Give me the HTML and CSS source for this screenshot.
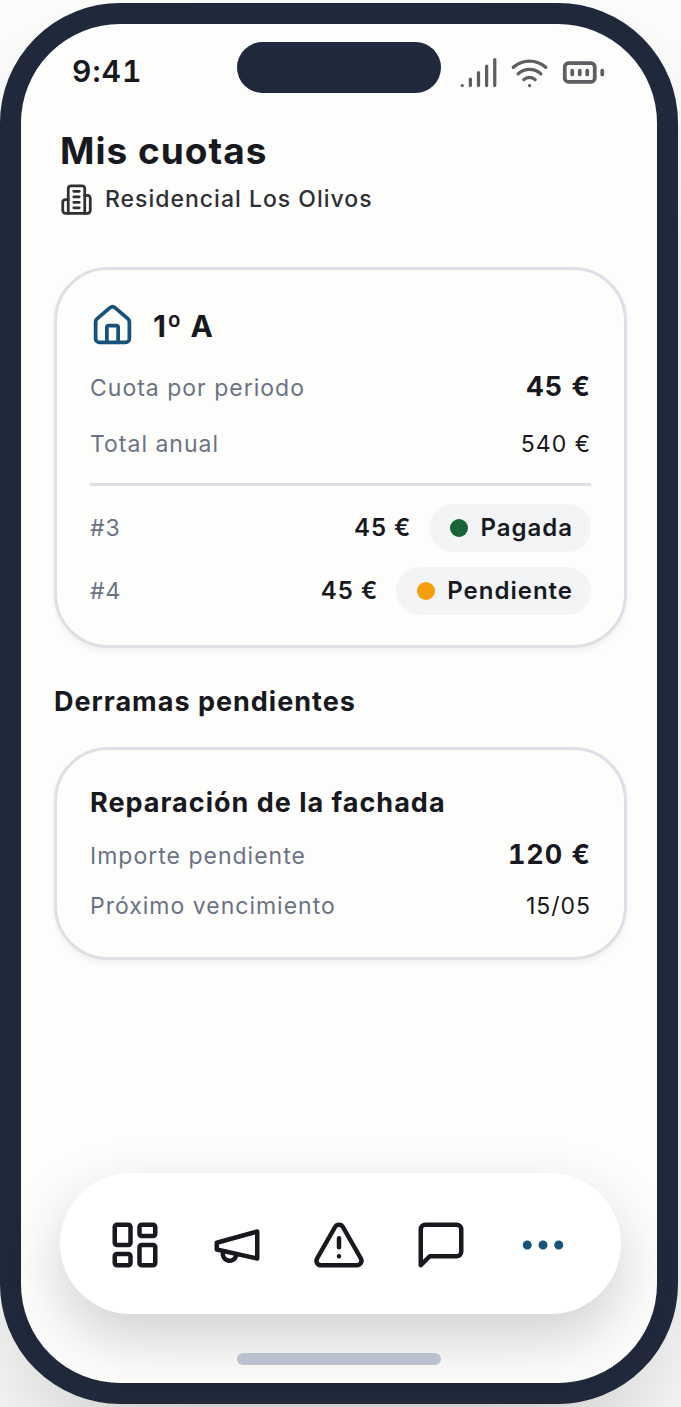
FILE: index.html
```html
<!DOCTYPE html>
<html lang="es">
<head>
  <meta charset="UTF-8" />
  <meta name="viewport" content="width=device-width, initial-scale=1.0"/>
  <title>Mis cuotas - Residencial Los Olivos</title>
  <link rel="stylesheet" href="styles.css">
</head>
<body>
  <div class="phone">
    <div class="status-bar">
      <span class="time">9:41</span>
      <span class="island"></span>
      <div class="status-icons">
        <svg class="icon" viewBox="0 0 24 24"><path d="M2 20h.01M7 20v-4M12 20v-8M17 20V8M22 4v16"/></svg>
        <svg class="icon" viewBox="0 0 24 24"><path d="M12 20h.01M2 8.82a15 15 0 0 1 20 0M5 12.859a10 10 0 0 1 14 0M8.5 16.429a5 5 0 0 1 7 0"/></svg>
        <svg class="icon battery" viewBox="0 0 24 24"><rect x="2" y="7" width="16" height="10" rx="2"/><path d="M22 11v2M6 11v2M10 11v2M14 11v2"/></svg>
      </div>
    </div>

    <header class="header">
      <h1>Mis cuotas</h1>
      <p class="community">
        <svg class="icon" viewBox="0 0 24 24"><path d="M6 22V4a2 2 0 0 1 2-2h8a2 2 0 0 1 2 2v18Z"/><path d="M6 12H4a2 2 0 0 0-2 2v6a2 2 0 0 0 2 2h2M18 9h2a2 2 0 0 1 2 2v9a2 2 0 0 1-2 2h-2M10 6h4M10 10h4M10 14h4M10 18h4"/></svg>
        Residencial Los Olivos
      </p>
    </header>

    <main class="content">
      <section class="card card-fees">
        <div class="unit">
          <svg class="icon" viewBox="0 0 24 24"><path d="M15 21v-8a1 1 0 0 0-1-1h-4a1 1 0 0 0-1 1v8"/><path d="M3 10a2 2 0 0 1 .709-1.528l7-5.999a2 2 0 0 1 2.582 0l7 5.999A2 2 0 0 1 21 10v9a2 2 0 0 1-2 2H5a2 2 0 0 1-2-2z"/></svg>
          <h2>1º A</h2>
        </div>
        <div class="row">
          <span class="label">Cuota por periodo</span>
          <strong class="amount">45 €</strong>
        </div>
        <div class="row">
          <span class="label">Total anual</span>
          <span>540 €</span>
        </div>
        <ul class="payments">
          <li>
            <span class="label">#3</span>
            <span class="price">45 €</span>
            <span class="badge paid">Pagada</span>
          </li>
          <li>
            <span class="label">#4</span>
            <span class="price">45 €</span>
            <span class="badge pending">Pendiente</span>
          </li>
        </ul>
      </section>

      <h2 class="section-title">Derramas pendientes</h2>

      <section class="card card-extra">
        <h3>Reparación de la fachada</h3>
        <div class="row">
          <span class="label">Importe pendiente</span>
          <strong class="amount">120 €</strong>
        </div>
        <div class="row">
          <span class="label">Próximo vencimiento</span>
          <span>15/05</span>
        </div>
      </section>
    </main>

    <nav class="tab-bar">
      <button type="button" aria-label="Inicio">
        <svg class="icon" viewBox="0 0 24 24"><rect x="3" y="3" width="7" height="9" rx="1"/><rect x="14" y="3" width="7" height="5" rx="1"/><rect x="14" y="12" width="7" height="9" rx="1"/><rect x="3" y="16" width="7" height="5" rx="1"/></svg>
      </button>
      <button type="button" aria-label="Anuncios">
        <svg class="icon" viewBox="0 0 24 24"><path d="m3 11 18-5v12L3 14v-3z"/><path d="M11.6 16.8a3 3 0 1 1-5.8-1.6"/></svg>
      </button>
      <button type="button" aria-label="Incidencias">
        <svg class="icon" viewBox="0 0 24 24"><path d="m21.73 18-8-14a2 2 0 0 0-3.48 0l-8 14A2 2 0 0 0 4 21h16a2 2 0 0 0 1.73-3"/><path d="M12 9v4M12 17h.01"/></svg>
      </button>
      <button type="button" aria-label="Mensajes">
        <svg class="icon" viewBox="0 0 24 24"><path d="M21 15a2 2 0 0 1-2 2H7l-4 4V5a2 2 0 0 1 2-2h14a2 2 0 0 1 2 2z"/></svg>
      </button>
      <button type="button" class="active" aria-label="Más">
        <svg class="icon" viewBox="0 0 24 24"><circle cx="5" cy="12" r="1"/><circle cx="12" cy="12" r="1"/><circle cx="19" cy="12" r="1"/></svg>
      </button>
    </nav>
    <div class="home-indicator"></div>
  </div>
</body>
</html>
```
FILE: styles.css
```css
* {
  box-sizing: border-box;
}

body {
  margin: 0;
  padding: 3px 3px 3px 0;
  font-family: Inter, "Liberation Sans", sans-serif;
  font-size: 23px;
  line-height: 36px;
  letter-spacing: 1px;
  color: #18181f;
  background-color: #fdfdfb;
}

h1, h2, h3, p, ul {
  margin: 0;
  padding: 0;
}

.icon {
  display: block;
  flex: none;
  fill: none;
  stroke: currentColor;
  stroke-width: 2;
  stroke-linecap: round;
  stroke-linejoin: round;
}

.phone {
  display: flex;
  flex-direction: column;
  min-height: calc(100vh - 6px);
  border: 21px solid #1f293b;
  border-radius: 120px;
  background-color: #fdfdfb;
  box-shadow: 0 75px 150px -36px rgba(0, 0, 0, 0.25);
}

/* status bar */
.status-bar {
  display: grid;
  grid-template-columns: 1fr 204px 1fr;
  align-items: center;
  height: 78px;
  padding: 18px 51px 0;
}

.time {
  padding-bottom: 3px;
  font-size: 30px;
  font-weight: 600;
  font-variant-numeric: tabular-nums;
}

.island {
  align-self: start;
  height: 51px;
  border-radius: 26px;
  background-color: #1f293b;
}

.status-icons {
  display: flex;
  align-items: center;
  justify-content: flex-end;
  gap: 12px;
  color: #5d5e62;
}

.status-icons .icon {
  width: 39px;
  height: 39px;
}

.status-icons .battery {
  width: 45px;
  height: 45px;
}

/* header */
.header {
  padding: 25px 39px 51px;
}

.header h1 {
  font-size: 37px;
  font-weight: 700;
  line-height: 48px;
}

.community {
  display: flex;
  align-items: center;
  gap: 12px;
  margin-top: 8px;
  font-weight: 500;
  line-height: 33px;
  color: #2f2f35;
}

.community .icon {
  width: 33px;
  height: 33px;
}

/* content */
.content {
  padding: 0 30px 0 33px;
}

.card {
  display: flex;
  flex-direction: column;
  padding: 33px;
  border: 3px solid #dedee6;
  border-radius: 54px;
  box-shadow: 0 3px 6px rgba(0, 0, 0, 0.06);
}

.card-fees {
  gap: 21px;
  padding-bottom: 30px;
}

.card-extra {
  gap: 15px;
}

.card-extra h3 {
  font-size: 27px;
  font-weight: 700;
  line-height: 39px;
}

.unit {
  display: flex;
  align-items: center;
  gap: 18px;
  color: #17527b;
}

.unit .icon {
  width: 45px;
  height: 45px;
}

.unit h2 {
  font-size: 30px;
  font-weight: 700;
  color: #18181f;
}

.row {
  display: flex;
  align-items: baseline;
  justify-content: space-between;
  height: 36px;
}

.label {
  color: #6b7285;
}

.amount {
  font-size: 27px;
  font-weight: 700;
  font-variant-numeric: tabular-nums;
}

.payments {
  display: flex;
  flex-direction: column;
  gap: 15px;
  padding-top: 18px;
  border-top: 3px solid #dedee6;
  list-style: none;
}

.payments li {
  display: flex;
  align-items: center;
  gap: 18px;
}

.price {
  margin-left: auto;
  font-size: 24px;
  font-weight: 600;
}

.badge {
  display: flex;
  align-items: center;
  gap: 12px;
  height: 48px;
  padding: 0 18px 0 21px;
  border-radius: 24px;
  font-size: 24px;
  font-weight: 600;
  background-color: #f3f4f6;
}

.badge::before {
  content: "";
  width: 18px;
  height: 18px;
  border-radius: 50%;
}

.paid::before {
  background-color: #176534;
}

.pending::before {
  background-color: #f59e0b;
}

.section-title {
  margin: 36px 0 27px;
  font-size: 27px;
  font-weight: 700;
}

/* bottom navigation */
.tab-bar {
  display: flex;
  align-items: center;
  height: 141px;
  margin: auto 36px 39px 39px;
  padding: 0 27px 0 24px;
  border-radius: 71px;
  background-color: #ffffff;
  box-shadow: 0 24px 60px rgba(0, 0, 0, 0.18);
}

.tab-bar button {
  display: flex;
  flex: 1;
  justify-content: center;
  padding: 3px 0 0;
  border: none;
  color: #18181f;
  background: none;
  cursor: pointer;
}

.tab-bar .active {
  color: #17527b;
}

.tab-bar .icon {
  width: 54px;
  height: 54px;
}

.home-indicator {
  position: relative;
  width: 204px;
  height: 12px;
  margin: 0 auto 18px;
  border-radius: 6px;
  background-color: #bac2d0;
}
```
